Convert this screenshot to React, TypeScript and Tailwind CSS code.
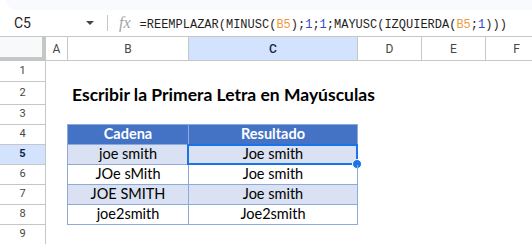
import React from "react";

const ROWS = [
  { n: 1, h: "h-[21px]" },
  { n: 2, h: "h-[23px]" },
  { n: 3, h: "h-[20px]" },
  { n: 4, h: "h-[20px]" },
  { n: 5, h: "h-[20px]" },
  { n: 6, h: "h-[20px]" },
  { n: 7, h: "h-[20px]" },
  { n: 8, h: "h-[20px]" },
  { n: 9, h: "h-[20px]" },
];

const DATA: Record<number, [string, string]> = {
  5: ["joe smith", "Joe smith"],
  6: ["JOe sMith", "Joe smith"],
  7: ["JOE SMITH", "Joe smith"],
  8: ["joe2smith", "Joe2smith"],
};

function Formula() {
  const ref = "text-[#ef9a3c]";
  const num = "text-[#3246d3]";
  return (
    <span className="whitespace-nowrap font-['Liberation_Mono',monospace] text-[12px] text-[#1f1f1f]">
      =REEMPLAZAR(MINUSC(<span className={ref}>B5</span>);<span className={num}>1</span>;
      <span className={num}>1</span>;MAYUSC(IZQUIERDA(<span className={ref}>B5</span>;
      <span className={num}>1</span>)))
    </span>
  );
}

export default function App() {
  return (
    <div className="h-[244px] w-[532px] overflow-hidden bg-white font-['Roboto',sans-serif]">
      {/* toolbar edge */}
      <div className="h-[10px] bg-white">
        <div className="ml-[6px] h-full rounded-bl-[22px] bg-[#f8fafd]" />
      </div>

      {/* Formula bar */}
      <div className="flex h-[27px] items-center border-b border-[#c7c7c7]">
        <span className="ml-[14px] w-[60px] text-[14px] text-[#1f1f1f]">C5</span>
        <span className="ml-[12px] h-0 w-0 border-x-[4px] border-t-[4px] border-x-transparent border-t-[#444746]" />
        <span className="ml-[13px] h-[16px] w-px bg-[#c7c7c7]" />
        <span className="ml-[11px] font-['Liberation_Serif',serif] text-[16px] italic text-[#a0a4a8]">fx</span>
        <span className="ml-[9px]">
          <Formula />
        </span>
      </div>

      {/* Column headers */}
      <div className="flex h-[24px] text-[12px] text-[#444746]">
        <div className="w-[46px] shrink-0 border-r-4 border-b-4 border-[#c4c7c5] bg-[#f8f9fa]" />
        <div className="flex w-[22px] shrink-0 items-center justify-center border-r border-b border-[#c4c7c5]">A</div>
        <div className="flex w-[121px] shrink-0 items-center justify-center border-r border-b border-[#c4c7c5]">B</div>
        <div className="flex w-[169px] shrink-0 items-center justify-center border-r border-b border-[#c4c7c5] bg-[#d3e3fd] font-medium text-[#0b1f4a]">
          C
        </div>
        <div className="flex w-[64px] shrink-0 items-center justify-center border-r border-b border-[#c4c7c5]">D</div>
        <div className="flex w-[64px] shrink-0 items-center justify-center border-r border-b border-[#c4c7c5]">E</div>
        <div className="flex w-[62px] shrink-0 items-center justify-center border-r border-b border-[#c4c7c5]">F</div>
      </div>

      {/* Rows */}
      {ROWS.map((r) => {
        const inTable = r.n >= 4 && r.n <= 8;
        const striped = r.n === 5 || r.n === 7;
        const cell = inTable
          ? `border-b border-[#8eaadb] ${r.n === 4 ? "bg-[#4472c4] font-bold text-white" : striped ? "bg-[#d9e1f2]" : ""}`
          : r.n === 3
            ? "border-b border-[#8eaadb]"
            : "";
        const [b, c] = r.n === 4 ? ["Cadena", "Resultado"] : DATA[r.n] ?? ["", ""];
        return (
          <div key={r.n} className={`flex ${r.h} font-['Lato',sans-serif] text-[14.5px] text-black`}>
            <div
              className={`flex w-[46px] shrink-0 items-center justify-center border-r border-b border-[#c4c7c5] font-['Roboto',sans-serif] text-[11px] ${
                r.n === 5 ? "bg-[#d3e3fd] font-bold text-[#0b1f4a]" : "text-[#444746]"
              }`}
            >
              {r.n}
            </div>
            <div className="w-[21px] shrink-0" />
            <div
              className={`flex w-[122px] shrink-0 items-center justify-center leading-none ${cell} ${
                inTable ? "border-x border-[#8eaadb]" : ""
              }`}
            >
              {r.n === 2 ? (
                <span className="w-full self-end whitespace-nowrap pb-[2px] pl-[5px] text-[17.5px] font-bold">
                  Escribir la Primera Letra en Mayúsculas
                </span>
              ) : (
                b
              )}
            </div>
            <div
              className={`relative flex w-[169px] shrink-0 items-center justify-center leading-none ${cell} ${
                inTable ? "border-r border-[#8eaadb]" : ""
              }`}
            >
              {c}
              {r.n === 5 && (
                <div className="absolute -top-[1px] -right-[1px] -bottom-[1px] -left-[2px] border-2 border-[#1a73e8]">
                  <span className="absolute -right-[6px] -bottom-[6px] h-[10px] w-[10px] rounded-full border border-white bg-[#1a73e8]" />
                </div>
              )}
            </div>
            <div className="flex-1" />
          </div>
        );
      })}
    </div>
  );
}
